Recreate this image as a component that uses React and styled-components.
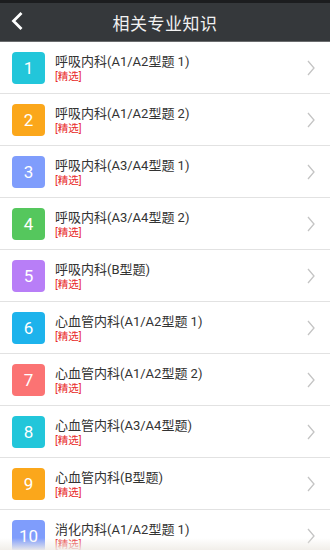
import React from "react";
import styled, { createGlobalStyle } from "styled-components";

const Global = createGlobalStyle`
  html, body { margin: 0; padding: 0; background: #fff; }
  body { font-family: "Roboto", "Noto Sans CJK SC", sans-serif; overflow: hidden; }
`;

const Page = styled.div`
  width: 330px;
  height: 550px;
  position: relative;
  overflow: hidden;
  background: #fff;
`;

const Header = styled.header`
  height: 38px;
  border-top: 3px solid #1c1d1f;
  border-bottom: 1px solid #6a6c6e;
  background: #35383b;
  display: flex;
  align-items: center;
  justify-content: center;
  position: relative;
`;

const BackButton = styled.div`
  position: absolute;
  left: 9px;
  top: 8px;
  width: 16px;
  height: 20px;
  display: flex;
  align-items: center;
  justify-content: center;
`;

const Title = styled.h1`
  margin: 0;
  color: #f2f2f2;
  font-family: "Noto Sans CJK SC", sans-serif;
  font-size: 17px;
  font-weight: 400;
  letter-spacing: 0.5px;
`;

const List = styled.div`
  display: flex;
  flex-direction: column;
`;

const Row = styled.div`
  height: 51px;
  border-bottom: 1px solid #e2e2e2;
  display: flex;
  align-items: center;
  padding: 0 15px 0 12px;
`;

const Badge = styled.div`
  width: 33px;
  height: 32px;
  border-radius: 4px;
  background: ${(p) => p.$color};
  color: #fff;
  font-family: "Roboto", sans-serif;
  font-size: 17px;
  font-weight: 400;
  display: flex;
  align-items: center;
  justify-content: center;
  flex-shrink: 0;
`;

const Texts = styled.div`
  flex: 1;
  margin-left: 10px;
  display: flex;
  flex-direction: column;
  margin-top: 1px;
`;

const ItemTitle = styled.div`
  font-family: "Roboto", "Noto Sans CJK SC", sans-serif;
  font-size: 13px;
  color: #333;
  line-height: 16px;
`;

const Tag = styled.div`
  font-family: "Roboto", "Noto Sans CJK SC", sans-serif;
  font-size: 10.5px;
  color: #e8292b;
  line-height: 13px;
`;

const Chevron = styled.div`
  width: 8px;
  height: 16px;
  display: flex;
`;

const BottomFade = styled.div`
  position: absolute;
  left: 0;
  right: 0;
  bottom: 0;
  height: 12px;
  background: linear-gradient(to bottom, rgba(245,243,240,0), rgba(240,237,232,0.92));
`;

const items = [
  { n: 1, t: "呼吸内科(A1/A2型题 1)", c: "#22c6da" },
  { n: 2, t: "呼吸内科(A1/A2型题 2)", c: "#fba71b" },
  { n: 3, t: "呼吸内科(A3/A4型题 1)", c: "#7f9dfc" },
  { n: 4, t: "呼吸内科(A3/A4型题 2)", c: "#55c75d" },
  { n: 5, t: "呼吸内科(B型题)", c: "#b87ef7" },
  { n: 6, t: "心血管内科(A1/A2型题 1)", c: "#1db3ec" },
  { n: 7, t: "心血管内科(A1/A2型题 2)", c: "#fb7373" },
  { n: 8, t: "心血管内科(A3/A4型题)", c: "#22c6da" },
  { n: 9, t: "心血管内科(B型题)", c: "#fba71b" },
  { n: 10, t: "消化内科(A1/A2型题 1)", c: "#7f9dfc" },
];

export default function App() {
  return (
    <Page>
      <Global />
      <Header>
        <BackButton>
          <svg width="14" height="18" viewBox="0 0 14 18">
            <path d="M10.5 2 L3.5 9 L10.5 16" fill="none" stroke="#fff" strokeWidth="2.8" strokeLinecap="square" />
          </svg>
        </BackButton>
        <Title>相关专业知识</Title>
      </Header>
      <List>
        {items.map((it) => (
          <Row key={it.n}>
            <Badge $color={it.c}>{it.n}</Badge>
            <Texts>
              <ItemTitle>{it.t}</ItemTitle>
              <Tag>[精选]</Tag>
            </Texts>
            <Chevron>
              <svg width="8" height="16" viewBox="0 0 8 16">
                <path d="M1 1 L7 8 L1 15" fill="none" stroke="#c4c4c4" strokeWidth="1.3" />
              </svg>
            </Chevron>
          </Row>
        ))}
      </List>
      <BottomFade />
    </Page>
  );
}
